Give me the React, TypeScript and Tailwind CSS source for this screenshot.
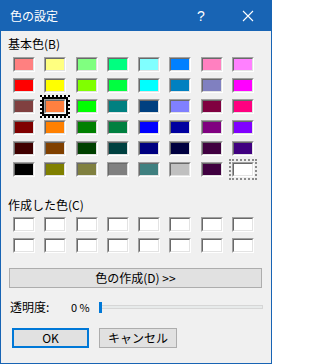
import React from "react";

const basic = [
  ["#ff8080", "#ffff80", "#80ff80", "#00ff80", "#80ffff", "#0080ff", "#ff80c0", "#ff80ff"],
  ["#ff0000", "#ffff00", "#80ff00", "#00ff40", "#00ffff", "#0080c0", "#8080c0", "#ff00ff"],
  ["#804040", "#ff8040", "#00ff00", "#008080", "#004080", "#8080ff", "#800040", "#ff0080"],
  ["#800000", "#ff8000", "#008000", "#008040", "#0000ff", "#0000a0", "#800080", "#8000ff"],
  ["#400000", "#804000", "#004000", "#004040", "#000080", "#000040", "#400040", "#400080"],
  ["#000000", "#808000", "#808040", "#808080", "#408080", "#c0c0c0", "#400040", "#ffffff"],
];

const Swatch = ({ color, focus }: { color: string; focus?: "sel" | "dot" }) => (
  <div className="relative w-[22px] h-[15px]">
    {focus === "sel" && (
      <>
        <span className="absolute -inset-[4px] border-2 border-dotted border-black" />
        <span className="absolute -inset-[2px] border-2 border-black" />
      </>
    )}
    {focus === "dot" && <span className="absolute -inset-[3px] border-2 border-dotted border-[#8a8a8a]" />}
    <div className="w-full h-full border border-t-[#a0a0a0] border-l-[#a0a0a0] border-b-white border-r-white">
      <div
        className="w-full h-full border border-t-[#696969] border-l-[#696969] border-b-[#e3e3e3] border-r-[#e3e3e3]"
        style={{ backgroundColor: color }}
      />
    </div>
  </div>
);

export default function App() {
  return (
    <div
      className="w-[272px] h-[364px] border border-[#1864b4] bg-[#f0f0f0] flex flex-col text-[12px] text-black leading-[16px]"
      style={{ fontFamily: '"Noto Sans CJK JP", "Noto Sans", sans-serif' }}
    >
      <div className="h-[30px] bg-[#1864b4] flex items-center text-white">
        <span className="ml-[9px] text-[12px]">色の設定</span>
        <span className="ml-auto w-[10px] text-center text-[14px] mr-[36px]" style={{ fontFamily: '"Liberation Sans", sans-serif' }}>?</span>
        <svg className="mr-[17px]" width="12" height="12" viewBox="0 0 12 12">
          <path d="M1 1 L11 11 M11 1 L1 11" stroke="white" strokeWidth="1.1" />
        </svg>
      </div>

      <div className="mt-[5px] ml-[7px]">基本色(B)</div>
      <div className="mt-[5px] ml-[12px] grid grid-cols-[repeat(8,22px)] gap-x-[9.3px] gap-y-[6px]">
        {basic.map((row, r) =>
          row.map((c, i) => (
            <Swatch
              key={`${r}-${i}`}
              color={c}
              focus={r === 2 && i === 1 ? "sel" : r === 5 && i === 7 ? "dot" : undefined}
            />
          ))
        )}
      </div>

      <div className="mt-[20px] ml-[7px]">作成した色(C)</div>
      <div className="mt-[4px] ml-[12px] grid grid-cols-[repeat(8,22px)] gap-x-[9.3px] gap-y-[6px]">
        {Array.from({ length: 16 }).map((_, i) => (
          <Swatch key={i} color="#ffffff" />
        ))}
      </div>

      <button className="mt-[15px] ml-[8px] w-[253px] h-[20px] bg-[#e1e1e1] border border-[#adadad] flex items-center justify-center">
        色の作成(D) &gt;&gt;
      </button>

      <div className="mt-[11px] h-[16px] flex items-center">
        <span className="ml-[9px] w-[61px]">透明度:</span>
        <span className="w-[28px] whitespace-nowrap text-[11px]">0 %</span>
        <div className="relative w-[164px] h-[11px] flex items-center">
          <div className="w-full h-[4px] bg-[#e7eaea] border border-[#d6d6d6]" />
          <span className="absolute left-0 top-0 w-[3px] h-[11px] bg-[#0078d7]" />
        </div>
      </div>

      <div className="mt-[13px] flex gap-[10px] ml-[11px]">
        <button className="w-[77px] h-[20px] bg-[#e1e1e1] border-2 border-[#0078d7] flex items-center justify-center">
          OK
        </button>
        <button className="w-[78px] h-[20px] bg-[#e1e1e1] border border-[#adadad] flex items-center justify-center">
          キャンセル
        </button>
      </div>
    </div>
  );
}
